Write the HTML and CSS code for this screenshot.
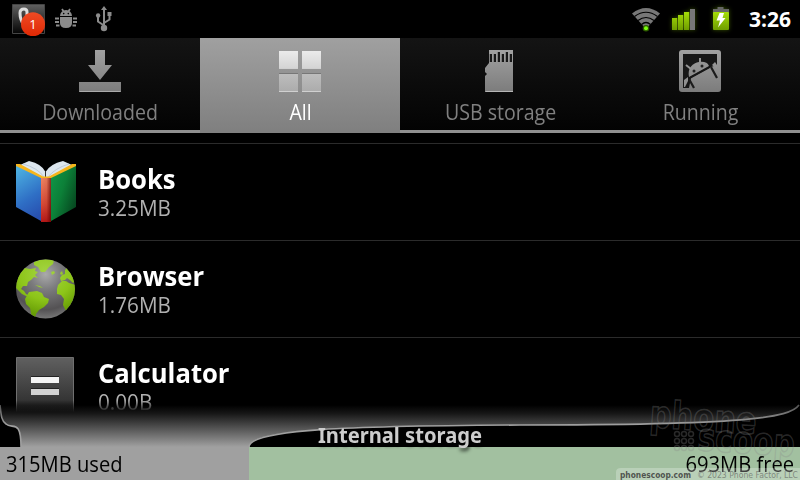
FILE: index.html
```
<!DOCTYPE html>
<html lang="en">

<head>
    <meta charset="UTF-8">
    <meta name="viewport" content="width=device-width, initial-scale=1.0">
    <title>Manage applications</title>
    <link rel="stylesheet" href="styles.css">
</head>

<body>
    <header class="status-bar">
        <div class="notifications">
            <svg class="call-icon" width="36" height="34" viewBox="0 0 36 34">
                <defs>
                    <linearGradient id="callBg" x2="0" y2="1">
                        <stop offset="0" stop-color="#606060" />
                        <stop offset=".6" stop-color="#282828" />
                        <stop offset="1" stop-color="#050505" />
                    </linearGradient>
                    <linearGradient id="badge" x2="0" y2="1">
                        <stop offset="0" stop-color="#ee4b24" />
                        <stop offset="1" stop-color="#e02804" />
                    </linearGradient>
                </defs>
                <path d="M1.500 2.500H33.500V31.500H1.500z" fill="url(#callBg)" stroke="#454545" />
                <path d="M13 23q-4-5-4-12 0-4 4-4 3 0 3 3v6l10 5" fill="none" stroke="#ddd" stroke-width="3" />
                <circle cx="22" cy="22.200" r="12" fill="url(#badge)" />
                <text x="22" y="27" class="badge-text">1</text>
            </svg>
            <svg class="debug-icon" width="22" height="22" viewBox="0 0 22 22" fill="#8c8c8c">
                <path d="M5 8a6 6 0 0 1 12 0zM5 9h12v6q0 5-6 5t-6-5z" />
                <path d="M7 1l2 3M15 1l-2 3M4 10.500H0M18 10.500h4M4 14H0M18 14h4M4.500 17.500H1M17.500 17.500H21" fill="none" stroke="#8c8c8c" stroke-width="1.800" />
                <circle cx="8.700" cy="5.600" r=".8" fill="#000" />
                <circle cx="13.300" cy="5.600" r=".8" fill="#000" />
            </svg>
            <svg class="usb-icon" width="18" height="26" viewBox="0 0 18 26" fill="#8c8c8c">
                <path d="M9 22V3M9 19.500l-6-4V9.500M9 17l5.500-3.500V7" fill="none" stroke="#8c8c8c" stroke-width="2" />
                <circle cx="9" cy="22" r="3.200" />
                <circle cx="3.100" cy="9.500" r="2.200" />
                <path d="M9 0l3 4H6zM12.500 6h4v4h-4z" />
            </svg>
        </div>
        <div class="indicators">
            <svg class="wifi-icon" width="30" height="26" viewBox="0 0 30 26">
                <path d="M15 22L1 6.500Q15-4.500 29 6.500z" fill="#777" />
                <path d="M3.500 9.500Q15 1 26.500 9.500M7 13.500Q15 7.500 23 13.500M10.500 17.500Q15 13.500 19.500 17.500" fill="none" stroke="#000" stroke-width="1.200" />
                <circle cx="15" cy="21.300" r="3.300" fill="#2d5a00" />
                <circle cx="15" cy="21.300" r="2" fill="#7cff10" />
            </svg>
            <svg class="signal-icon" width="24" height="24" viewBox="0 0 24 24">
                <defs>
                    <linearGradient id="lime" x2="0" y2="1">
                        <stop offset="0" stop-color="#a5de08" />
                        <stop offset="1" stop-color="#6f9d00" />
                    </linearGradient>
                </defs>
                <path d="M0 10h5.200v12H0zM6 7h5.200v15H6zM12 4h5.200v18H12z" fill="url(#lime)" />
                <path d="M18 1h5v21h-5z" fill="#777" />
            </svg>
            <svg class="battery-icon" width="18" height="26" viewBox="0 0 18 26">
                <path d="M5.500 0h6v2h-6zM1 2h16v4H1z" fill="#666" />
                <rect x="1" y="5" width="16" height="18" rx="1" fill="url(#lime)" />
                <path d="M7.500 6H12l-1.500 5H13.500L6 20.500 8 13.500H4.500z" fill="#fff" />
            </svg>
            <span class="clock">3:26</span>
        </div>
    </header>

    <nav class="tabs">
        <div class="tab">
            <svg class="tab-icon" width="44" height="44" viewBox="0 0 44 44">
                <defs>
                    <linearGradient id="tabGray" x2="0" y2="44" gradientUnits="userSpaceOnUse">
                        <stop offset="0" stop-color="#a2a2a2" />
                        <stop offset="1" stop-color="#7b7b7b" />
                    </linearGradient>
                </defs>
                <path d="M17 1h10v15h7L22 31 10 16h7zM1 33h42v10H1z" fill="url(#tabGray)" />
                <path d="M1.500 42.500h41" stroke="#aaa" />
            </svg>
            <span class="tab-label">Downloaded</span>
        </div>
        <div class="tab active">
            <svg class="tab-icon" width="44" height="44" viewBox="0 0 44 44">
                <defs>
                    <linearGradient id="light" x2="0" y2="1">
                        <stop offset="0" stop-color="#ebebeb" />
                        <stop offset="1" stop-color="#d3d3d3" />
                    </linearGradient>
                    <linearGradient id="dim" x2="0" y2="1">
                        <stop offset="0" stop-color="#bdbdbd" />
                        <stop offset="1" stop-color="#ababab" />
                    </linearGradient>
                </defs>
                <path d="M1 2h19v18H1zM24 2h19v18H24z" fill="url(#light)" />
                <path d="M1 25h19v18H1zM24 25h19v18H24z" fill="url(#dim)" />
                <path d="M1 24.500h19M24 24.500h19" stroke="#777" />
                <path d="M1 42.500h19M24 42.500h19M1 19.500h19M24 19.500h19" stroke="#d0d0d0" />
            </svg>
            <span class="tab-label">All</span>
        </div>
        <div class="tab">
            <svg class="tab-icon" width="44" height="44" viewBox="0 0 44 44">
                <path d="M11 1h24v42H7V27l2-2-2-2v-4l4-5z" fill="url(#tabGray)" />
                <path d="M12.900 5v8M16.900 5v8M20.900 3v10M24.900 5v8M28.900 3v10M32.900 5v8" stroke="#181818" stroke-width="2.200" />
                <path d="M7.500 42.500H35" stroke="#b5b5b5" />
            </svg>
            <span class="tab-label">USB storage</span>
        </div>
        <div class="tab">
            <svg class="tab-icon" width="44" height="44" viewBox="0 0 44 44">
                <rect x="1" y="1" width="42" height="42" rx="3" fill="url(#tabGray)" />
                <path d="M5 5h34v11L33 18 13 29l-2 10H5z" fill="#171717" />
                <path d="M11 28C9 19 15 14 21 13q8-1 10 4z" fill="url(#tabGray)" />
                <path d="M8 16l5 4M22 9v5" stroke="#949494" stroke-width="2" />
                <path d="M10 30L32 18" stroke="#171717" stroke-width="1.500" />
                <path d="M6 31l4-3v4l-3 6H6z" fill="#909090" />
                <path d="M11 30l5 9M33 18l6 11" fill="none" stroke="#1c1c1c" stroke-width="2.200" />
                <path d="M34 16l3-3 2 3v4z" fill="#959595" />
                <circle cx="16" cy="22" r="1.500" fill="#222" />
                <circle cx="24" cy="17" r="1.500" fill="#222" />
            </svg>
            <span class="tab-label">Running</span>
        </div>
    </nav>

    <main class="app-list">
        <div class="app">
            <svg class="app-icon" width="64" height="64" viewBox="0 0 64 64">
                <defs>
                    <linearGradient id="blue" x1=".3" x2=".6" y2="1">
                        <stop offset="0" stop-color="#4baee0" />
                        <stop offset=".6" stop-color="#2f6fc5" />
                        <stop offset="1" stop-color="#2850b0" />
                    </linearGradient>
                    <linearGradient id="green" x2="1" y2=".7">
                        <stop offset="0" stop-color="#10984a" />
                        <stop offset=".5" stop-color="#0c8038" />
                        <stop offset="1" stop-color="#064820" />
                    </linearGradient>
                    <linearGradient id="red" x2="0" y2="1">
                        <stop offset="0" stop-color="#ef8562" />
                        <stop offset=".6" stop-color="#d84a35" />
                        <stop offset="1" stop-color="#b51818" />
                    </linearGradient>
                    <linearGradient id="spine">
                        <stop offset="0" stop-color="#700" stop-opacity="0" />
                        <stop offset=".55" stop-color="#600" stop-opacity=".1" />
                        <stop offset="1" stop-color="#500" stop-opacity=".7" />
                    </linearGradient>
                </defs>
                <path d="M6 5l9-4q13 3 16.500 11Q36 4 49 1l9 4L34 18h-4z" fill="#dce6ee" />
                <path d="M9 4q15 4 21 13M55 4Q41 8 34 17" fill="none" stroke="#b5c3d0" stroke-width=".8" />
                <path d="M31.500 11v6" stroke="#333" />
                <path d="M2 4l4 0L29 16.500h6L58 4h4v4L37 20H27L2 7z" fill="#f6b51c" />
                <path d="M2 6l25 12v43L2 47z" fill="url(#blue)" />
                <path d="M62 6L37 18v43l25-14z" fill="url(#green)" />
                <path d="M27 18h10v44H27z" fill="url(#red)" />
                <path d="M27 18h10v44H27z" fill="url(#spine)" />
            </svg>
            <div class="app-info">
                <p class="app-name">Books</p>
                <p class="app-size">3.25MB</p>
            </div>
        </div>
        <div class="app">
            <svg class="app-icon" width="64" height="64" viewBox="0 0 64 64">
                <defs>
                    <radialGradient id="sea" cx=".5" cy=".25" r=".75">
                        <stop offset="0" stop-color="#aaa" />
                        <stop offset=".35" stop-color="#7c7c7e" />
                        <stop offset=".8" stop-color="#545254" />
                        <stop offset="1" stop-color="#777" />
                    </radialGradient>
                    <radialGradient id="land" cx=".5" cy=".25" r=".7">
                        <stop offset="0" stop-color="#a5d544" />
                        <stop offset=".6" stop-color="#8dc519" />
                        <stop offset="1" stop-color="#659b05" />
                    </radialGradient>
                    <clipPath id="globe">
                        <circle cx="31.500" cy="32" r="29.500" />
                    </clipPath>
                </defs>
                <circle cx="31.500" cy="32" r="29.500" fill="url(#sea)" />
                <path clip-path="url(#globe)" fill="url(#land)" d="M20 5q12-5 20-2l-1 4-4 3-4 5-4 0-3-5-4-2zM0 28L6 15l5-4 5 1 6-1-1 3 3 1-3 3 3 3-4-1-3 3-3 2-1 4-4 0-2 3 3 2 2 3 4 2-2 1-6-3-6-6zM15 35l8-1 5 2 2 4 5 2-1 4-4 4-5 3-3 4-1 5-3-1-2-10-4-4-1-5zM43 32l1-4 4-4 4 0 3 2 7 2 1 13-8 13h-3l-3-6 1-6-3-4-4-1zM46 21l2-3 3-1 0-4 3-3 8 13-3 3-3-3-3-2-2 2-4 1zM37 15l3-1 1 2-3 2zM46 16l2-2 1 3-2 1zM21 28l5 1 3 2-4-1z" />
            </svg>
            <div class="app-info">
                <p class="app-name">Browser</p>
                <p class="app-size">1.76MB</p>
            </div>
        </div>
        <div class="app">
            <svg class="app-icon" width="64" height="64" viewBox="0 0 64 64">
                <defs>
                    <linearGradient id="calc" x2="0" y2="1">
                        <stop offset="0" stop-color="#606060" />
                        <stop offset="1" stop-color="#262626" />
                    </linearGradient>
                </defs>
                <path d="M2.500 3.500h57v57h-57z" fill="url(#calc)" stroke="#707070" />
                <path d="M17 23h28v6H17z" fill="#f4f4f4" />
                <path d="M17 35h28v6H17z" fill="#d2d2d2" />
                <path d="M17 22.500h28M17 34.500h28" stroke="#222" />
            </svg>
            <div class="app-info">
                <p class="app-name">Calculator</p>
                <p class="app-size">0.00B</p>
            </div>
        </div>
    </main>

    <footer class="storage">
        <svg class="storage-curve" width="800" height="47" viewBox="0 0 800 47">
            <defs>
                <linearGradient id="shade" x2="0" y2="12" gradientUnits="userSpaceOnUse">
                    <stop offset="0" stop-color="#000" stop-opacity="0" />
                    <stop offset="1" stop-color="#000" />
                </linearGradient>
                <linearGradient id="fade" x2="0" y1="5" y2="47" gradientUnits="userSpaceOnUse">
                    <stop offset="0" stop-color="#a0a0a0" stop-opacity="0" />
                    <stop offset=".2" stop-color="#a0a0a0" stop-opacity=".14" />
                    <stop offset="1" stop-color="#a0a0a0" />
                </linearGradient>
                <linearGradient id="edge" x2="0" y1="5" y2="25" gradientUnits="userSpaceOnUse">
                    <stop offset="0" stop-color="#555" />
                    <stop offset="1" stop-color="#a0a0a0" />
                </linearGradient>
            </defs>
            <path d="M0 0h800v47H0z" fill="url(#shade)" />
            <path d="M0 0h800v5C790 18 745 25 520 25 350 26 250 29 249 47H21C21 18 12 30 6 24 1 21 1 13 0 5z" fill="url(#fade)" />
            <path d="M0 5C1 13 1 21 6 24c6 6 15-6 15 23M249 47C250 29 350 26 520 25 745 25 790 18 799 5" fill="none" stroke="url(#edge)" stroke-width="1.600" />
        </svg>
        <div class="storage-bar">
            <div class="used"><span>315MB used</span></div>
            <div class="free"><span>693MB free</span></div>
        </div>
        <div class="storage-title">Internal storage</div>
        <svg class="watermark" width="190" height="90" viewBox="0 0 190 90">
            <g class="logo-text">
                <text x="39" y="37" textLength="107" lengthAdjust="spacingAndGlyphs" transform="rotate(4 39 37)">phone</text>
                <text x="87" y="60" textLength="97" lengthAdjust="spacingAndGlyphs" transform="rotate(4 87 60)">scoop</text>
            </g>
            <g class="logo-dots">
                <circle cx="67" cy="44" r="2.500" />
                <circle cx="74" cy="44" r="2.500" />
                <circle cx="81" cy="44" r="2.500" />
                <circle cx="67" cy="51" r="2.500" />
                <circle cx="74" cy="51" r="2.500" />
                <circle cx="81" cy="51" r="2.500" />
                <circle cx="67" cy="58" r="2.500" />
                <circle cx="74" cy="58" r="2.500" />
                <circle cx="81" cy="58" r="2.500" />
            </g>
            <path d="M6 90v-8q0-4 5-4h179v12z" fill="#fff" fill-opacity=".25" />
            <text x="10" y="88" class="site" textLength="71" lengthAdjust="spacingAndGlyphs">phonescoop.com</text>
            <text x="87" y="88" class="credit" textLength="101" lengthAdjust="spacingAndGlyphs">© 2023 Phone Factor, LLC</text>
        </svg>
    </footer>
</body>

</html>
```
FILE: styles.css
```
* {
    box-sizing: border-box;
    margin: 0;
    padding: 0;
}

body {
    position: relative;
    width: 800px;
    height: 480px;
    overflow: hidden;
    background: #000;
    color: #fff;
    font-family: "Open Sans", "Noto Sans", sans-serif;
}

svg {
    display: block;
    flex: none;
}

.status-bar {
    display: flex;
    justify-content: space-between;
    height: 38px;
}

.notifications {
    display: flex;
    padding: 2px 0 0 11px;
}

.badge-text {
    fill: #fff;
    font-size: 13px;
    text-anchor: middle;
}

.debug-icon {
    margin: 6px 0 0 8px;
}

.usb-icon {
    margin: 4px 0 0 18px;
}

.indicators {
    display: flex;
    padding-right: 9px;
}

.wifi-icon {
    margin: 7px 11px 0 0;
}

.signal-icon {
    margin: 8px 16px 0 0;
    filter: drop-shadow(0 0 2px #365000);
}

.battery-icon {
    margin: 7px 19px 0 0;
    filter: drop-shadow(0 0 2px #365000);
}

.clock {
    width: 42px;
    font-size: 21px;
    font-weight: bold;
    line-height: 39px;
    white-space: nowrap;
}

/* tabs */
.tabs {
    display: flex;
    height: 95px;
}

.tab {
    flex: 1;
    display: flex;
    flex-direction: column;
    align-items: center;
    padding-top: 11px;
    border-bottom: 3px solid #909090;
    background: linear-gradient(#141414, #030303);
    color: #808080;
}

.tab.active {
    border-bottom-color: #808080;
    background: linear-gradient(#a0a0a0, #808080);
    color: #fff;
}

.tab-label {
    margin: 3px 0 0 1px;
    font-size: 22px;
    line-height: 30px;
    white-space: nowrap;
    transform: scaleX(0.89);
}

/* application list */
.app-list {
    height: 347px;
    padding-top: 10px;
    overflow: hidden;
}

.app {
    display: flex;
    height: 97px;
    padding: 16px 0 0 14px;
    border-top: 1px solid #2b2b2b;
}

.app-info {
    margin-left: 20px;
}

.app-name {
    padding-top: 1px;
    font-size: 26px;
    font-weight: bold;
    line-height: 36px;
    transform: scaleX(0.985);
    transform-origin: 0 0;
}

.app-size {
    margin-top: -3px;
    color: #b0b0b0;
    font-size: 21px;
    line-height: 28px;
    transform: scaleX(0.985);
    transform-origin: 0 0;
}

/* storage meter */
.storage {
    position: absolute;
    left: 0;
    bottom: 0;
    width: 800px;
    height: 80px;
}

.storage-title {
    position: absolute;
    top: 20px;
    left: 0;
    width: 100%;
    color: #ccc;
    font-family: "Noto Sans", sans-serif;
    font-size: 21px;
    font-weight: bold;
    line-height: 30px;
    text-align: center;
    text-shadow: 1px 3px 4px rgba(0, 0, 0, 0.7);
    transform: scaleX(0.96);
}

.storage-bar {
    display: flex;
    height: 33px;
    color: #000;
    font-size: 21px;
    line-height: 34px;
}

.used {
    width: 249px;
    padding-left: 6px;
    background: #a0a0a0;
}

.free {
    flex: 1;
    padding-right: 6px;
    background: #a2c0a0;
    text-align: right;
}

.used span,
.free span {
    display: inline-block;
    transform: scaleX(0.96);
    transform-origin: 0 0;
}

.free span {
    transform-origin: 100% 0;
}

.watermark {
    position: absolute;
    right: 0;
    bottom: 0;
}

.logo-text {
    fill: none;
    stroke: #888;
    stroke-opacity: 0.3;
    stroke-width: 1.5px;
    font: bold 38px "DejaVu Sans", sans-serif;
}

.logo-dots {
    fill: none;
    stroke: #888;
    stroke-opacity: 0.3;
    stroke-width: 1.5px;
}

.site,
.credit {
    fill: #333;
    fill-opacity: 0.8;
    font: bold 9px "DejaVu Sans", sans-serif;
}

.credit {
    fill: #555;
    fill-opacity: 0.6;
    font-weight: normal;
}
```
